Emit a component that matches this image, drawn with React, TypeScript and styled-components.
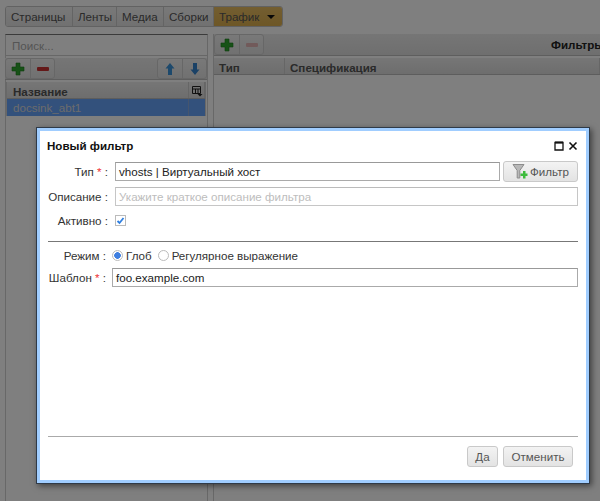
import React from 'react'
import styled, { createGlobalStyle } from 'styled-components'

const Global = createGlobalStyle`
  html, body { margin: 0; padding: 0; height: 100%; }
  body { font-family: "Liberation Sans", Arial, sans-serif; font-size: 11.6px; color: #333; background: #fff; overflow: hidden; }
  * { box-sizing: border-box; }
`

const Page = styled.div`
  position: relative;
  width: 600px;
  height: 501px;
  overflow: hidden;
  padding: 6px 0 0 5px;
`

const Tabs = styled.div`
  display: flex;
  width: 278px;
  height: 21px;
  border: 1px solid #c4c4c4;
  border-radius: 3px;
  overflow: hidden;
  margin-bottom: 7px;
`

const Tab = styled.div<{ $w: number; $active?: boolean }>`
  width: ${(p) => p.$w}px;
  display: flex;
  align-items: center;
  gap: 8px;
  padding-left: 5px;
  font-size: 11.6px;
  color: #555;
  border-right: 1px solid #c8c8c8;
  background: ${(p) => (p.$active ? 'linear-gradient(#e6bc62, #dcae4e)' : 'linear-gradient(#f2f2f2, #e2e2e2)')};
  &:last-child { border-right: 0; }
`

const Caret = styled.span`
  width: 0;
  height: 0;
  border-left: 4px solid transparent;
  border-right: 4px solid transparent;
  border-top: 4px solid #111;
`

const Columns = styled.div`
  display: flex;
  gap: 5px;
  height: 467px;
`

const LeftColumn = styled.div`
  width: 203px;
  flex: none;
  display: flex;
  flex-direction: column;
  border-left: 1px solid #d0d0d0;
  border-right: 1px solid #d0d0d0;
`

const RightColumn = styled.div`
  flex: 1;
  border-left: 1px solid #d0d0d0;
`

const Search = styled.div`
  height: 22px;
  border: 1px solid #cfcfcf;
  border-top-color: #777;
  margin-left: -1px;
  margin-right: -1px;
  padding: 4px 6px;
  font-size: 11.6px;
  color: #aaa;
  margin-bottom: 2px;
`

const Toolbar = styled.div<{ $inset?: number }>`
  height: 22px;
  flex: none;
  display: flex;
  justify-content: space-between;
  position: relative;
  margin-left: ${(p) => p.$inset ?? 0}px;
  background: linear-gradient(#ececec, #dedede);
  border-bottom: 1px solid #bdbdbd;
`

const ToolGroup = styled.div`
  display: flex;
  height: 21px;
  border: 1px solid #cfcfcf;
  border-radius: 3px;
  background: linear-gradient(#f2f2f2, #e2e2e2);
`

const ToolButton = styled.div<{ $w?: number }>`
  width: ${(p) => p.$w ?? 24}px;
  display: flex;
  align-items: center;
  justify-content: center;
  & + & { border-left: 1px solid #cfcfcf; }
`

const ToolbarTitle = styled.div`
  position: absolute;
  left: 337px;
  top: 4px;
  font-weight: 700;
  font-size: 11.6px;
  color: #222;
  white-space: nowrap;
`

const Grid = styled.div`
  margin: 2px 1px 0 0;
  border-left: 1px solid #d0d0d0;
  border-right: 1px solid #d0d0d0;
`

const GridHeader = styled.div<{ $offset?: number }>`
  display: flex;
  height: 17px;
  margin-top: ${(p) => p.$offset ?? 0}px;
  background: linear-gradient(#ededed, #dbdbdb);
  border-bottom: 1px solid #bbb;
  font-weight: 700;
  font-size: 11.6px;
  color: #555;
`

const HeaderCell = styled.div<{ $w?: number; $pad?: number }>`
  ${(p) => (p.$w ? `width: ${p.$w}px; flex: none;` : 'flex: 1;')}
  padding: 3px 0 0 ${(p) => p.$pad ?? 5}px;
  border-right: 1px solid #ccc;
  white-space: nowrap;
  overflow: hidden;
  display: flex;
`

const SelectedRow = styled.div`
  display: flex;
  height: 17px;
  background: #66a2f8;
  color: #d8d8d8;
  font-size: 11.6px;
  padding: 2px 0 0 6px;
  position: relative;
`

const RowDivider = styled.span`
  position: absolute;
  right: 16px;
  top: 0;
  bottom: 0;
  width: 1px;
  background: #8aabdc;
`

const Overlay = styled.div`
  position: absolute;
  inset: 0;
  background: rgba(0, 0, 0, 0.5);
`

const Dialog = styled.div`
  position: absolute;
  left: 36px;
  top: 127px;
  width: 554px;
  height: 357px;
  background: #fff;
  border: 4px solid #a0cdff;
  outline: 1px solid #2f3a48;
  outline-offset: -1px;
  box-shadow: 2px 2px 6px rgba(0, 0, 0, 0.5);
  padding: 0 8px 0 8px;
  display: flex;
  flex-direction: column;
`

const DialogHead = styled.div`
  display: flex;
  justify-content: space-between;
  align-items: center;
  height: 27px;
  margin: 1px -1px 2px -1px;
  padding-right: 1px;
`

const DialogTitle = styled.div`
  font-weight: 700;
  font-size: 11.6px;
  color: #111;
`

const HeadIcons = styled.div`
  display: flex;
  gap: 4px;
  align-items: center;
`

const Row = styled.div<{ $h: number; $mb?: number }>`
  display: flex;
  align-items: center;
  height: ${(p) => p.$h}px;
  margin-bottom: ${(p) => p.$mb ?? 0}px;
`

const Label = styled.div<{ $w?: number }>`
  width: ${(p) => p.$w ?? 60}px;
  flex: none;
  text-align: right;
  font-size: 11.6px;
  color: #333;
  white-space: nowrap;
`

const Req = styled.span`
  color: #e33;
`

const Input = styled.div<{ $ml?: number; $placeholder?: boolean }>`
  flex: 1;
  height: 19px;
  margin-left: ${(p) => p.$ml ?? 7}px;
  border: 1px solid ${(p) => (p.$placeholder ? '#c6c6c6' : '#aaa')};
  border-top-color: ${(p) => (p.$placeholder ? '#bbb' : '#999')};
  padding: 1px 3px;
  font-size: 11.6px;
  line-height: 15px;
  color: ${(p) => (p.$placeholder ? '#bdbdbd' : '#222')};
  white-space: nowrap;
`

const Button = styled.div<{ $w: number; $ml?: number }>`
  width: ${(p) => p.$w}px;
  height: 21px;
  flex: none;
  margin-left: ${(p) => p.$ml ?? 0}px;
  display: flex;
  align-items: center;
  justify-content: center;
  gap: 2px;
  border: 1px solid #c9c9c9;
  border-radius: 3px;
  background: linear-gradient(#f3f3f3, #e3e3e3);
  font-size: 11.6px;
  color: #555;
`

const Checkbox = styled.div`
  width: 11px;
  height: 11px;
  margin-left: 7px;
  border: 1px solid #bbb;
  display: flex;
  align-items: center;
  justify-content: center;
`

const Radio = styled.span<{ $on?: boolean }>`
  width: 11px;
  height: 11px;
  border-radius: 50%;
  border: 1px solid #bbb;
  background: ${(p) => (p.$on ? 'radial-gradient(circle, #3f7fe0 0 3px, #fff 3.6px)' : '#fff')};
  flex: none;
`

const RadioGroup = styled.div`
  display: flex;
  align-items: center;
  gap: 3px;
  margin-left: 6px;
  font-size: 11.6px;
  color: #333;
`

const Spacer = styled.span<{ $w: number }>`
  width: ${(p) => p.$w}px;
`

const Rule = styled.div<{ $dark?: boolean }>`
  height: 1px;
  background: ${(p) => (p.$dark ? '#777' : '#aaa')};
`

const Body = styled.div`
  flex: 1;
`

const Footer = styled.div`
  display: flex;
  justify-content: flex-end;
  gap: 5px;
  padding: 9px 5px 13px 0;
`

const Plus = ({ color = '#2fa52f', size = 14 }: { color?: string; size?: number }) => (
  <svg width={size} height={size} viewBox="0 0 14 14">
    <path d="M5 1h4v4h4v4H9v4H5V9H1V5h4z" fill={color} stroke="#1c7a1c" strokeWidth="0.6" />
  </svg>
)

const Minus = ({ faded }: { faded?: boolean }) => (
  <svg width="14" height="14" viewBox="0 0 14 14">
    <rect x="1" y="5" width="12" height="4" rx="1" fill={faded ? '#e3b5b5' : '#c83232'} />
  </svg>
)

const Arrow = ({ up }: { up?: boolean }) => (
  <svg width="14" height="14" viewBox="0 0 14 14">
    <path
      d={up ? 'M7 1l4.500 5.500H9V13H5V6.500H2.500z' : 'M5 1h4v6.500h2.500L7 13 2.500 7.500H5z'}
      fill={up ? '#3b93d8' : '#3583cc'}
    />
  </svg>
)

const ColumnsIcon = () => (
  <svg width="12" height="12" viewBox="0 0 12 12">
    <path d="M1.500 1.500h8v7h-8zM1.500 4h8M4.500 4v4.500M7 4v4.500" fill="none" stroke="#222" />
    <path d="M6.500 9h5l-2.500 2.500z" fill="#222" />
  </svg>
)

const FilterAdd = () => (
  <svg width="16" height="17" viewBox="0 0 16 17">
    <path d="M1 1.500h11L7.800 7.500v7.500H5.200V7.500z" fill="#b8b8b8" stroke="#8c8c8c" />
    <path d="M8.500 10.500h2.500V8h2.500v2.500h2V13h-2v2.500H11V13H8.500z" fill="#3dbb3d" />
  </svg>
)

const Maximize = () => (
  <svg width="10" height="10" viewBox="0 0 10 10">
    <path d="M1 1.500h8v7.500H1z" fill="none" stroke="#111" strokeWidth="1.300" />
    <path d="M1 1.500h8" stroke="#111" strokeWidth="2" />
  </svg>
)

const Close = () => (
  <svg width="10" height="10" viewBox="0 0 10 10">
    <path d="M1.500 1.500l7 7M8.500 1.500l-7 7" stroke="#111" strokeWidth="1.600" />
  </svg>
)

const Check = () => (
  <svg width="9" height="9" viewBox="0 0 9 9">
    <path d="M1.500 5l2 2 4-5" fill="none" stroke="#2f7fe0" strokeWidth="1.800" />
  </svg>
)

export default function App() {
  return (
    <>
      <Global />
      <Page>
        <Tabs>
          <Tab $w={67}>Страницы</Tab>
          <Tab $w={44}>Ленты</Tab>
          <Tab $w={47}>Медиа</Tab>
          <Tab $w={50}>Сборки</Tab>
          <Tab $w={68} $active>
            Трафик <Caret />
          </Tab>
        </Tabs>
        <Columns>
          <LeftColumn>
            <Search>Поиск...</Search>
            <Toolbar $inset={-1}>
              <ToolGroup>
                <ToolButton><Plus /></ToolButton>
                <ToolButton><Minus /></ToolButton>
              </ToolGroup>
              <ToolGroup>
                <ToolButton><Arrow up /></ToolButton>
                <ToolButton><Arrow /></ToolButton>
              </ToolGroup>
            </Toolbar>
            <Grid>
              <GridHeader>
                <HeaderCell $pad={6}>Название</HeaderCell>
                <HeaderCell $w={16} $pad={2}><ColumnsIcon /></HeaderCell>
              </GridHeader>
              <SelectedRow>
                docsink_abt1
                <RowDivider />
              </SelectedRow>
            </Grid>
          </LeftColumn>
          <RightColumn>
            <Toolbar>
              <ToolGroup>
                <ToolButton><Plus /></ToolButton>
                <ToolButton><Minus faded /></ToolButton>
              </ToolGroup>
              <ToolbarTitle>Фильтры</ToolbarTitle>
            </Toolbar>
            <GridHeader $offset={2}>
              <HeaderCell $w={71}>Тип</HeaderCell>
              <HeaderCell>Спецификация</HeaderCell>
            </GridHeader>
          </RightColumn>
        </Columns>
        <Overlay />
        <Dialog>
          <DialogHead>
            <DialogTitle>Новый фильтр</DialogTitle>
            <HeadIcons>
              <Maximize />
              <Close />
            </HeadIcons>
          </DialogHead>
          <Row $h={21} $mb={4}>
            <Label>Тип <Req>*</Req> :</Label>
            <Input>vhosts | Виртуальный хост</Input>
            <Button $w={75} $ml={3}>
              <FilterAdd />
              Фильтр
            </Button>
          </Row>
          <Row $h={21} $mb={5}>
            <Label>Описание :</Label>
            <Input $placeholder>Укажите краткое описание фильтра</Input>
          </Row>
          <Row $h={17} $mb={12}>
            <Label>Активно :</Label>
            <Checkbox><Check /></Checkbox>
          </Row>
          <Rule $dark />
          <Row $h={26}>
            <Label $w={58}>Режим :</Label>
            <RadioGroup>
              <Radio $on />
              Глоб
              <Spacer $w={0} />
              <Radio />
              Регулярное выражение
            </RadioGroup>
          </Row>
          <Row $h={19}>
            <Label $w={58}>Шаблон <Req>*</Req> :</Label>
            <Input $ml={6}>foo.example.com</Input>
          </Row>
          <Body />
          <Rule />
          <Footer>
            <Button $w={31}>Да</Button>
            <Button $w={70}>Отменить</Button>
          </Footer>
        </Dialog>
      </Page>
    </>
  )
}
